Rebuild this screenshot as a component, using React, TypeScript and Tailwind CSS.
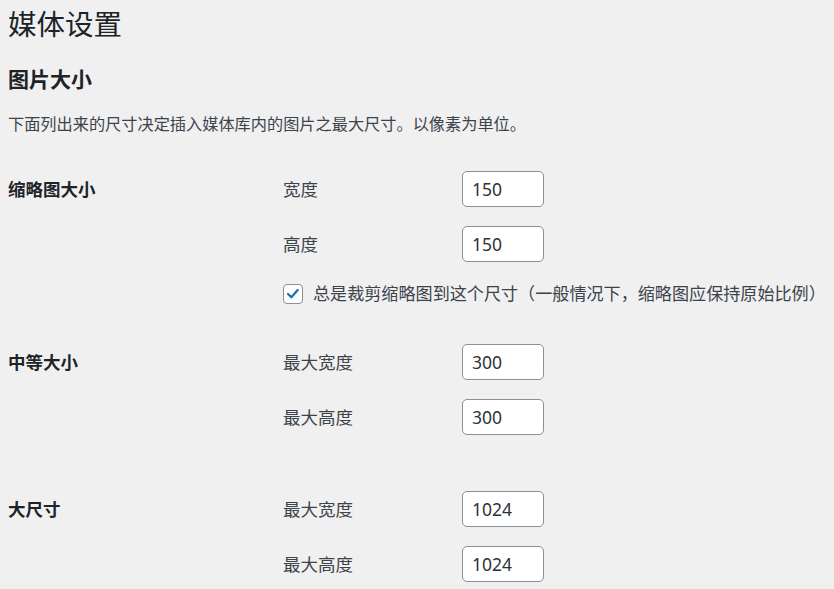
import React from "react";

const font = {
  fontFamily: '"Noto Sans", "Noto Sans CJK SC", sans-serif',
};

function Field({ label, value }: { label: string; value: string }) {
  return (
    <div className="flex items-center h-[36px]">
      <label className="w-[179px] shrink-0 text-[17.5px] text-[#3c434a]">{label}</label>
      <input
        type="text"
        defaultValue={value}
        className="w-[82px] h-[36px] shrink-0 bg-white border border-[#8c8f94] rounded-[5px] px-[9px] text-[17.5px] text-[#2c3338] outline-none"
        style={font}
      />
    </div>
  );
}

function Check() {
  return (
    <div className="flex items-center h-[20px]">
      <span className="w-[20px] h-[20px] bg-white border border-[#8c8f94] rounded-[4px] flex items-center justify-center mr-[10px] shrink-0">
        <svg viewBox="0 0 20 20" className="w-[18px] h-[18px]">
          <path
            d="M4.5 10 L8.2 13.6 L15.2 5.6"
            fill="none"
            stroke="#2271b1"
            strokeWidth="2.6"
            strokeLinecap="round"
            strokeLinejoin="round"
          />
        </svg>
      </span>
      <span className="text-[17.1px] text-[#3c434a] whitespace-nowrap">
        总是裁剪缩略图到这个尺寸（一般情况下，缩略图应保持原始比例）
      </span>
    </div>
  );
}

export default function App() {
  return (
    <div
      className="min-h-screen bg-[#f0f0f1] text-[#1d2327] pl-[8px] overflow-hidden"
      style={font}
    >
      <h1 className="text-[28.5px] leading-[36px] font-normal pt-[6px] text-[#1d2327]">媒体设置</h1>
      <h2 className="text-[21px] leading-[28px] font-bold mt-[23px] text-[#1d2327]">图片大小</h2>
      <p className="text-[16.2px] leading-[24px] mt-[19px] text-[#3c434a]">
        下面列出来的尺寸决定插入媒体库内的图片之最大尺寸。以像素为单位。
      </p>

      <div className="flex mt-[35px]">
        <div className="w-[275px] shrink-0 text-[17.5px] font-bold leading-[36px]">缩略图大小</div>
        <div className="flex flex-col">
          <Field label="宽度" value="150" />
          <div className="h-[19px]" />
          <Field label="高度" value="150" />
          <div className="h-[22px]" />
          <Check />
        </div>
      </div>

      <div className="flex mt-[40px]">
        <div className="w-[275px] shrink-0 text-[17.5px] font-bold leading-[36px]">中等大小</div>
        <div className="flex flex-col gap-[19px]">
          <Field label="最大宽度" value="300" />
          <Field label="最大高度" value="300" />
        </div>
      </div>

      <div className="flex mt-[56px]">
        <div className="w-[275px] shrink-0 text-[17.5px] font-bold leading-[36px]">大尺寸</div>
        <div className="flex flex-col gap-[19px]">
          <Field label="最大宽度" value="1024" />
          <Field label="最大高度" value="1024" />
        </div>
      </div>
    </div>
  );
}
